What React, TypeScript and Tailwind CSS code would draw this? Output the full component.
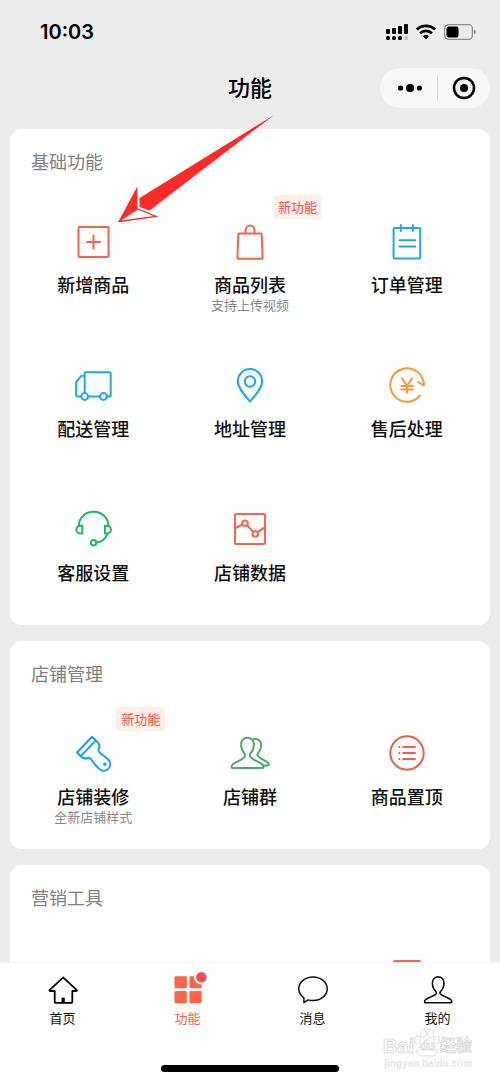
import React from 'react';

interface Feature {
  label: string;
  icon: React.ReactNode;
  note?: string;
  isNew?: boolean;
}

interface FeatureSectionProps {
  title: string;
  features: Feature[];
}

interface IconProps {
  className: string;
  children: React.ReactNode;
}

const FeatureIcon: React.FC<IconProps> = ({ className, children }) => (
  <svg
    viewBox="0 0 40 40"
    className={`w-10 h-10 ${className}`}
    fill="none"
    stroke="currentColor"
    strokeWidth="2"
    strokeLinecap="round"
    strokeLinejoin="round"
    aria-hidden="true"
  >
    {children}
  </svg>
);

const AddProductIcon = () => (
  <FeatureIcon className="text-[#f4654c]">
    <rect x="5.5" y="6" width="30" height="30" rx="1" />
    <path d="M20.5 14.5v13M14 21h13" />
  </FeatureIcon>
);

const BagIcon = () => (
  <FeatureIcon className="text-[#f4654c]">
    <path d="M9.3 12.6h21.4q.9 0 1 .9l.9 23.4q0 .9-.9.9H8.3q-.9 0-.9-.9l.9-23.4q.1-.9 1-.9z" />
    <path d="M15.7 12.2V9a4.4 4.4 0 0 1 8.8 0v3.2" />
  </FeatureIcon>
);

const OrderIcon = () => (
  <FeatureIcon className="text-[#1fa7e8]">
    <rect x="6.6" y="7" width="26.6" height="30.4" rx="1" />
    <path d="M13.8 4v6M25.8 4v6M12.5 19.2h15.8M12.5 25.4h15.8" />
  </FeatureIcon>
);

const TruckIcon = () => (
  <FeatureIcon className="text-[#1fa7e8]">
    <path d="M11.7 28V8.2q0-1 1-1h24q1 0 1 1v22.3q0 1-1 1H34M27 31.5H15M8.2 31.5H4.2q-1 0-1-1V17l4.8-5.7q.6-.6 1.4-.6h2.3" />
    <circle cx="11.7" cy="31.5" r="3.4" />
    <circle cx="30.4" cy="31.5" r="3.4" />
  </FeatureIcon>
);

const PinIcon = () => (
  <FeatureIcon className="text-[#1fa7f0]">
    <path d="M20 36.5C14.5 30 7.8 23 7.8 16.3a12.2 12.2 0 0 1 24.4 0C32.2 23 25.500 30 20 36.5z" />
    <circle cx="20" cy="16.5" r="5.2" />
  </FeatureIcon>
);

const RefundIcon = () => (
  <FeatureIcon className="text-[#f49b35]">
    <path d="M33 30.5A16.7 16.7 0 1 1 36.700 20.5L31.200 17M36.700 20.5l.3-3" />
    <path d="M15 13.5l5 7.2 5-7.2M20 20.7v7M14.300 21h11.400M14.300 24.6h11.400" />
  </FeatureIcon>
);

const HeadsetIcon = () => (
  <FeatureIcon className="text-[#20b768]">
    <path d="M5.700 16.5C6.200 8.5 12.300 2.8 20.600 2.8s14.400 5.700 14.900 13.700" />
    <path d="M9.300 16.700H7.200a3.900 3.900 0 0 0 0 7.800h2.100zM31.900 16.700H34a3.900 3.900 0 0 1 0 7.800h-2.100z" />
    <path d="M34.500 24.700c-1.700 4.600-5.500 8.300-11 8.900" />
    <circle cx="20.6" cy="33.7" r="2.7" />
  </FeatureIcon>
);

const ChartIcon = () => (
  <FeatureIcon className="text-[#f4654c]">
    <rect x="5" y="5" width="30" height="30" rx="1" />
    <path d="M5.500 19l7-3.500M17 16.200l6.200 6.700M27.600 23.200l7.200-4.900" />
    <circle cx="15" cy="14.2" r="2.8" />
    <circle cx="25.3" cy="25" r="2.8" />
  </FeatureIcon>
);

const BrushIcon = () => (
  <FeatureIcon className="text-[#1c9ff0]">
    <path d="M19 3.800L4 19.500l4.300 4.300c2 1.900 3.500 2.200 5.800 1.200 1.600-.7 3-.3 4 1.200 1.800 2.700 4.700 6.600 8 9.600a6.500 6.500 0 0 0 10-8.200c-2.500-3.300-6.700-5.300-9.200-7.600-1.400-1.300-1.700-2.600-1-4.300 1-2.500.7-4.500-1.100-6.300z" />
    <path d="M22.600 7.600L7.700 23.100" />
    <circle cx="31.9" cy="31.3" r="1.7" fill="currentColor" stroke="none" />
  </FeatureIcon>
);

const GroupIcon = () => (
  <FeatureIcon className="text-[#4ea86f]">
    <path d="M17.400 4.800c-4 0-6.500 3-6.300 7.200.1 3.600 1.200 6 3.300 8.400.8 1 1 2.300.2 3.400-2.500 3.200-8 4.700-11.700 7.400-1.200.9-1.400 2-1.400 3.100q0 .8.800.8h30.400q.8 0 .8-.8c0-1.100-.3-2.200-1.400-3.100-3.700-2.700-9.200-4.200-11.700-7.400-.8-1.100-.6-2.400.2-3.400 2.100-2.400 3.200-4.800 3.300-8.400.2-4.200-2.500-7.200-6.500-7.200z" />
    <path d="M23.300 6.200c4.800-1 8 1.700 7.900 6.300-.1 3.300-1.200 5.500-3 7.500-.8 1-1 2-.2 3 2.300 3 6.500 4.200 9.500 6.400 1.100.8 1.400 1.500 1.400 2.300q0 .7-.8.7h-4.700" />
  </FeatureIcon>
);

const PinnedListIcon = () => (
  <FeatureIcon className="text-[#ef5f4c]">
    <circle cx="20" cy="20" r="16.7" />
    <path d="M16.200 14h11.700M16.200 20h11.700M16.200 26h11.700M12.200 14h.2M12.200 20h.2M12.200 26h.2" />
  </FeatureIcon>
);

const CouponIcon = () => (
  <FeatureIcon className="text-[#f4654c]">
    <rect x="7" y="4" width="26" height="32" rx="1" />
  </FeatureIcon>
);

const basicFeatures: Feature[] = [
  { label: '新增商品', icon: <AddProductIcon /> },
  { label: '商品列表', icon: <BagIcon />, note: '支持上传视频', isNew: true },
  { label: '订单管理', icon: <OrderIcon /> },
  { label: '配送管理', icon: <TruckIcon /> },
  { label: '地址管理', icon: <PinIcon /> },
  { label: '售后处理', icon: <RefundIcon /> },
  { label: '客服设置', icon: <HeadsetIcon /> },
  { label: '店铺数据', icon: <ChartIcon /> },
];

const shopFeatures: Feature[] = [
  { label: '店铺装修', icon: <BrushIcon />, note: '全新店铺样式', isNew: true },
  { label: '店铺群', icon: <GroupIcon /> },
  { label: '商品置顶', icon: <PinnedListIcon /> },
];

const FeatureSection: React.FC<FeatureSectionProps> = ({ title, features }) => (
  <section className="bg-white rounded-xl px-[5px] pt-5">
    <h2 className="px-4 text-lg leading-6 text-[#808080]">{title}</h2>
    <div className="grid grid-cols-3 gap-y-7 pt-12">
      {features.map(feature => (
        <button key={feature.label} type="button" className="relative flex flex-col items-center h-[116px]">
          {feature.icon}
          <span className="mt-[11px] text-lg leading-6 font-medium text-[#111]">{feature.label}</span>
          {feature.note && <span className="text-[13px] leading-[18px] text-[#888]">{feature.note}</span>}
          {feature.isNew && (
            <span className="absolute -top-[26px] left-1/2 ml-[23px] px-[5px] rounded-[4px] bg-[#fdeeec] text-[13px] leading-6 text-[#f25542]">
              新功能
            </span>
          )}
        </button>
      ))}
    </div>
  </section>
);

const StatusBar = () => (
  <div className="flex items-center justify-between h-16 pl-10 pr-6">
    <span className="font-[Inter,sans-serif] text-xl font-semibold">10:03</span>
    <div className="flex items-center gap-2">
      <svg viewBox="0 0 22 16" className="w-[22px] h-4" aria-hidden="true">
        <rect x="0" y="5" width="4" height="5" rx="1" />
        <rect x="6" y="4" width="4" height="6" rx="1" />
        <rect x="12" y="2" width="4" height="8" rx="1" />
        <rect x="18" y="0" width="4" height="10" rx="1" />
        <rect x="0" y="12" width="4" height="4" rx="1.5" />
        <rect x="6" y="12" width="4" height="4" rx="1.5" />
        <rect x="12" y="12" width="4" height="4" rx="1.5" />
        <rect x="18" y="12" width="4" height="4" rx="1.5" fill="#c4c4c4" />
      </svg>
      <svg viewBox="0 0 20 16" className="w-5 h-4" fill="none" stroke="#000" strokeWidth="2.8" aria-hidden="true">
        <path d="M.9 5.600a13 13 0 0 1 18.200 0M4.200 9.300a8.300 8.300 0 0 1 11.600 0" />
        <path d="M10 15.200l-3-3a4.400 4.400 0 0 1 6 0z" fill="#000" stroke="none" />
      </svg>
      <svg viewBox="0 0 32 16" className="w-8 h-4" aria-hidden="true">
        <rect x=".6" y=".6" width="27.8" height="14.8" rx="4" fill="none" stroke="#8f8f8f" strokeWidth="1.2" />
        <rect x="2.5" y="2.5" width="12" height="11" rx="2" />
        <path d="M30 5.500q1.800.6 1.800 2.500t-1.800 2.500z" fill="#8f8f8f" />
      </svg>
    </div>
  </div>
);

const TopBar = () => (
  <header className="grid grid-cols-3 items-center h-12 px-[10px]">
    <h1 className="col-start-2 pb-1 text-center text-[22px] leading-8 font-medium">功能</h1>
    <div className="justify-self-end flex items-center w-[110px] h-10 rounded-full bg-[#f7f7f7]">
      <button type="button" aria-label="更多" className="flex-1 flex justify-center pl-1">
        <svg viewBox="0 0 24 8" className="w-6 h-2">
          <circle cx="2.6" cy="4" r="2.6" />
          <circle cx="12" cy="4" r="4" />
          <circle cx="21.4" cy="4" r="2.6" />
        </svg>
      </button>
      <span className="w-px h-[26px] bg-[#dcdcdc]" />
      <button type="button" aria-label="关闭" className="flex-1 flex justify-center">
        <svg viewBox="0 0 24 24" className="w-6 h-6">
          <circle cx="12" cy="12" r="10" fill="none" stroke="#000" strokeWidth="2.5" />
          <circle cx="12" cy="12" r="4" />
        </svg>
      </button>
    </div>
  </header>
);

const HomeIcon = () => (
  <svg viewBox="0 0 30 30" className="w-[30px] h-[30px]" fill="none" stroke="#000" strokeWidth="1.8" strokeLinejoin="round" aria-hidden="true">
    <path d="M14.700 2.800q.5-.5 1 0l12.800 12q.9 1-.3 1.200h-3.900v11q0 .8-.8.800H7.500q-.8 0-.8-.8V16H2.200q-1.200-.2-.3-1.200z" />
    <path d="M13.600 27.700v-5h3.200v5z" fill="#000" stroke="none" />
  </svg>
);

const GridIcon = () => (
  <svg viewBox="0 0 30 30" className="w-[30px] h-[30px] overflow-visible" fill="#fd6347" aria-hidden="true">
    <rect x="1.5" y="1.3" width="12.3" height="12" rx="1.2" />
    <rect x="16.5" y="1.3" width="12.2" height="12" rx="1.2" />
    <rect x="1.5" y="16" width="12.3" height="12.3" rx="1.2" />
    <rect x="16.5" y="16" width="12.2" height="12.3" rx="1.2" />
    <circle cx="28.3" cy="2.3" r="7.3" fill="#fff" />
    <circle cx="28.3" cy="2.3" r="5.2" fill="#fb4e50" />
  </svg>
);

const MessageIcon = () => (
  <svg viewBox="0 0 30 30" className="w-[30px] h-[30px]" fill="none" stroke="#111" strokeWidth="1.5" strokeLinejoin="round" aria-hidden="true">
    <path d="M5.900 27.500v-4.700C2.700 20.600.8 17.400.8 13.800.8 7.200 7.100 1.900 15 1.900s14.200 5.300 14.200 11.900S22.900 25.600 15 25.600c-1.700 0-3.300-.2-4.800-.7z" />
  </svg>
);

const ProfileIcon = () => (
  <svg viewBox="0 0 30 30" className="w-[30px] h-[30px]" fill="none" stroke="#111" strokeWidth="1.6" strokeLinejoin="round" aria-hidden="true">
    <path d="M15.200 1.900c-3.400 0-5.800 2.400-5.800 6 0 3.500 1 6 3.300 8.400.9 1 .9 2.200-.1 3-2.800 2.100-7.300 3.300-10 5.300-.8.600-1 1.500-1 2.400q0 .7.700.7h25.800q.7 0 .7-.7c0-.9-.2-1.800-1-2.400-2.700-2-7.200-3.200-10-5.300-1-.8-1-2-.1-3C20 13.900 21 11.400 21 7.900c0-3.600-2.400-6-5.800-6z" />
  </svg>
);

const tabs = [
  { label: '首页', icon: <HomeIcon />, active: false },
  { label: '功能', icon: <GridIcon />, active: true },
  { label: '消息', icon: <MessageIcon />, active: false },
  { label: '我的', icon: <ProfileIcon />, active: false },
];

const Watermark = () => (
  <div className="absolute right-7 bottom-3 flex flex-col items-end text-white font-['Liberation_Sans','Noto_Sans_CJK_SC',sans-serif] font-bold">
    <div className="flex items-end h-[30px] [-webkit-text-stroke:1px_#dedede]">
      <span className="text-xl leading-6">Bai</span>
      <span className="relative w-[26px] h-[30px]">
        <svg viewBox="0 0 26 30" className="w-[26px] h-[30px]" fill="#fff" stroke="#dedede" aria-hidden="true">
          <ellipse cx="3.5" cy="12" rx="3" ry="4" />
          <ellipse cx="9.5" cy="5.500" rx="3" ry="4.3" />
          <ellipse cx="16.5" cy="5.500" rx="3" ry="4.3" />
          <ellipse cx="22.5" cy="12" rx="3" ry="4" />
          <path d="M13 12c4 0 5 4 8 7 4 4 2 9-3 9-3 0-7-.5-10 0-5 0-7-5-3-9 3-3 4-7 8-7z" />
        </svg>
        <span className="absolute inset-x-0 bottom-1 text-center text-xs leading-4">du</span>
      </span>
      <span className="text-base leading-6">经验</span>
    </div>
    <span className="text-[10px] leading-3 text-[#e6e6e6]">jingyan.baidu.com</span>
  </div>
);

const TabBar = () => (
  <nav className="relative h-[120px] flex flex-col justify-between bg-white border-t border-[#f4f4f4] pb-[10px]">
    <div className="grid grid-cols-4 pt-3">
      {tabs.map(tab => (
        <a key={tab.label} href="#" className="flex flex-col items-center gap-1">
          {tab.icon}
          <span className={`text-[13px] leading-[18px] ${tab.active ? 'text-[#f4654c]' : 'text-[#111]'}`}>{tab.label}</span>
        </a>
      ))}
    </div>
    <div className="w-[178px] h-[7px] self-center rounded-full bg-black" />
    <Watermark />
  </nav>
);

// Hand-placed callout pointing at the first entry
const PointerArrow = () => (
  <svg viewBox="0 0 160 110" className="absolute top-[114px] left-[116px] w-40 h-[110px] pointer-events-none" aria-hidden="true">
    <path d="M158 1L23.500 84v9l10 3.500z" fill="#ff2a2a" />
    <path d="M2.500 107.500L21.300 72.500v22z" fill="#ff2a2a" />
    <path d="M2.500 107.500L21.500 95l18.500 7.500z" fill="#fff" stroke="#f52c2c" strokeWidth="1.3" />
  </svg>
);

const App: React.FC = () => {
  return (
    <div className="relative h-screen flex flex-col overflow-hidden bg-[#ececec] text-black font-['Noto_Sans_CJK_SC',sans-serif]">
      <StatusBar />
      <TopBar />
      <main className="flex-1 min-h-0 overflow-hidden px-[10px] pt-[17px]">
        <div className="flex flex-col gap-4">
          <FeatureSection title="基础功能" features={basicFeatures} />
          <FeatureSection title="店铺管理" features={shopFeatures} />
          <section className="bg-white rounded-t-xl px-[5px] pt-5">
            <h2 className="px-4 text-lg leading-6 text-[#808080]">营销工具</h2>
            <div className="grid grid-cols-3 pt-12">
              <div className="col-start-3 flex justify-center">
                <CouponIcon />
              </div>
            </div>
          </section>
        </div>
      </main>
      <TabBar />
      <PointerArrow />
    </div>
  );
};

export default App;
